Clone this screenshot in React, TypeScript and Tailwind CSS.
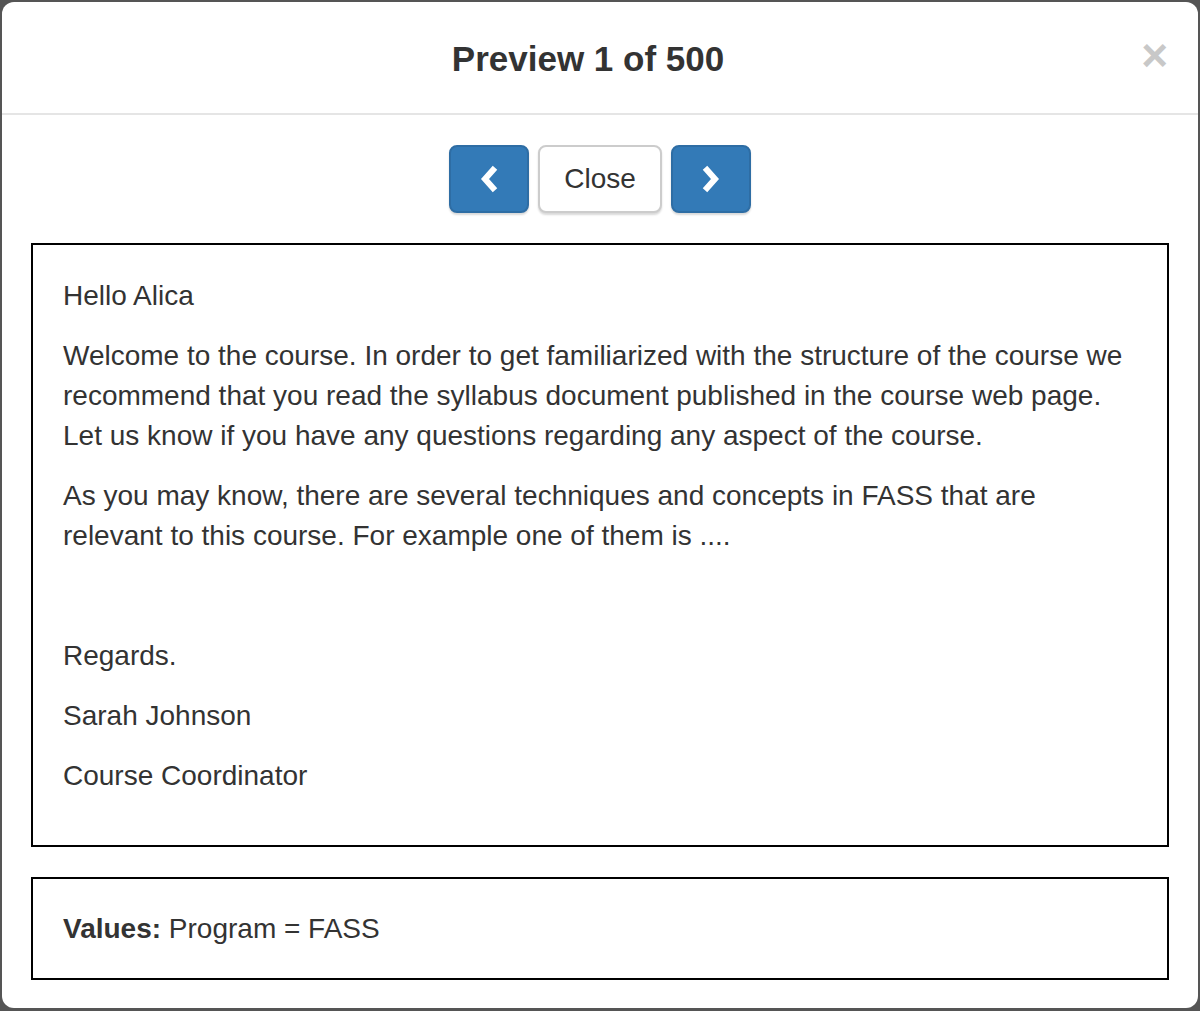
import React from "react";

const Chevron = ({ dir }: { dir: "left" | "right" }) => (
  <svg width="20" height="28" viewBox="0 0 20 28" className="block">
    <polyline
      points={dir === "left" ? "14,5 6,14 14,23" : "6,5 14,14 6,23"}
      fill="none"
      stroke="white"
      strokeWidth="6"
      strokeLinecap="square"
      strokeLinejoin="miter"
    />
  </svg>
);

export default function App() {
  return (
    <div
      className="w-[1200px] h-[1011px] bg-[#555555] overflow-hidden pt-[2px] px-[2px]"
      style={{ fontFamily: '"Liberation Sans", Arial, sans-serif' }}
    >
      <div className="bg-white rounded-[12px] h-[1006px] text-[#333333]">
        {/* Header */}
        <div className="relative h-[113px] border-b-2 border-[#e5e5e5] flex items-center justify-center">
          <h4 className="text-[35px] font-bold leading-[40px] mt-[3px] mr-[24px]">Preview 1 of 500</h4>
          <span className="absolute right-[30px] top-[30px] text-[46px] font-bold leading-[46px] text-[#c8c8c8]">
            ×
          </span>
        </div>
        {/* Body */}
        <div className="px-[29px] pt-[30px]">
          <div className="flex justify-center gap-[9px] h-[68px]">
            <button className="w-[80px] h-[68px] rounded-[8px] bg-[#337ab7] border-2 border-[#2e6da4] flex items-center justify-center shadow-[0_2px_2px_rgba(0,0,0,0.15)]">
              <Chevron dir="left" />
            </button>
            <button className="w-[124px] h-[68px] rounded-[8px] bg-white border-2 border-[#cccccc] text-[28px] text-[#333333] flex items-center justify-center shadow-[0_2px_2px_rgba(0,0,0,0.15)]">
              Close
            </button>
            <button className="w-[80px] h-[68px] rounded-[8px] bg-[#337ab7] border-2 border-[#2e6da4] flex items-center justify-center shadow-[0_2px_2px_rgba(0,0,0,0.15)]">
              <Chevron dir="right" />
            </button>
          </div>
          <div className="mt-[30px] border-2 border-black px-[30px] pt-[31px] pb-[29px] text-[28px] leading-[40px]">
            <p className="mb-[20px]">Hello Alica</p>
            <p className="mb-[20px] whitespace-nowrap">
              Welcome to the course. In order to get familiarized with the structure of the course we
              <br />
              recommend that you read the syllabus document published in the course web page.
              <br />
              Let us know if you have any questions regarding any aspect of the course.
            </p>
            <p className="mb-[20px] whitespace-nowrap">
              As you may know, there are several techniques and concepts in FASS that are
              <br />
              relevant to this course. For example one of them is ....
            </p>
            <p className="mb-[20px]">&nbsp;</p>
            <p className="mb-[20px]">Regards.</p>
            <p className="mb-[20px]">Sarah Johnson</p>
            <p className="mb-[20px]">Course Coordinator</p>
          </div>
          <div className="mt-[30px] border-2 border-black px-[30px] pt-[30px] pb-[29px] text-[28px] leading-[40px]">
            <p>
              <b>Values:</b> Program = FASS
            </p>
          </div>
        </div>
      </div>
    </div>
  );
}
